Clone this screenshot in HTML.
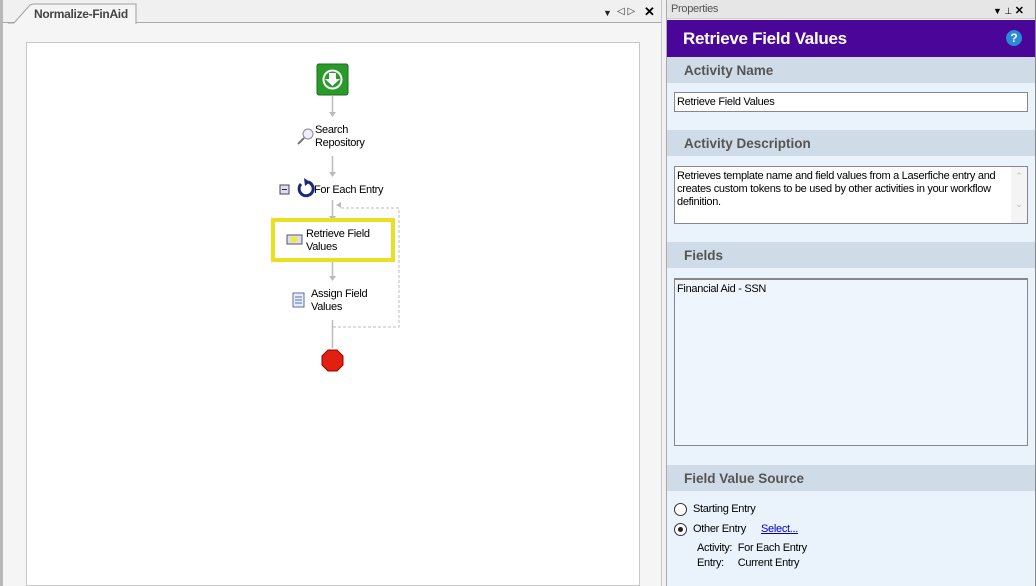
<!DOCTYPE html>
<html><head><meta charset="utf-8"><style>
*{margin:0;padding:0;box-sizing:border-box}
body{width:1036px;height:586px;overflow:hidden;background:#f0f0f0;font-family:"Liberation Sans",sans-serif;font-size:11px;color:#000;position:relative}
.a{position:absolute}
.t{letter-spacing:-0.3px;white-space:nowrap}
.hdr{position:absolute;left:667px;width:368px;height:26px;background:#cfdbe6;color:#555;font-weight:bold;font-size:13.5px;padding:6px 0 0 17px}
.box{position:absolute;background:#fff;border:1px solid #828790}
</style></head><body>
<!-- left panel -->
<div class="a" style="left:0;top:0;width:662px;height:586px;background:#f0f0f0;border-left:3px solid #b8b8b8"></div>
<div class="a" style="left:3px;top:22px;width:658px;height:564px;background:#f5f5f5;border-top:1px solid #a8a8a8"></div>
<svg class="a" style="left:8px;top:3px" width="130" height="21"><path d="M0 20 L6 20 L22 2 Q24 1 26 1 L128 1 L128 21" fill="#f5f5f5" stroke="#a0a0a0"/></svg>
<div class="a t" style="left:34px;top:7px;font-weight:bold;font-size:12px;color:#444">Normalize-FinAid</div>
<div class="a" style="left:603px;top:8px;font-size:9px;color:#222">▼</div>
<div class="a" style="left:617px;top:6px;font-size:10px;color:#333">◁ ▷</div>
<div class="a" style="left:644px;top:4px;font-size:13px;font-weight:bold">✕</div>
<div class="a" style="left:26px;top:42px;width:614px;height:544px;background:#fff;border:1px solid #c8c8c8"></div>
<div class="a" style="left:661px;top:0;width:5px;height:586px;background:#f0f0f0;border-left:1px solid #c8c8c8"></div>
<!-- workflow -->
<svg class="a" style="left:270px;top:60px" width="140" height="320">
<rect x="47" y="4" width="31" height="31" rx="2" fill="#2a9a2a" stroke="#1b6e1b"/>
<circle cx="62.5" cy="19.5" r="10" fill="#fff"/><circle cx="62.5" cy="19.5" r="8" fill="#2a9a2a"/>
<path d="M59 13h7v6h4l-7.5 7-7.5-7h4z" fill="#fff"/>
<g stroke="#bbb" stroke-width="1.5"><line x1="62.5" y1="36" x2="62.5" y2="54"/><line x1="62.5" y1="96" x2="62.5" y2="114"/><line x1="62.5" y1="140" x2="62.5" y2="158"/><line x1="62.5" y1="202" x2="62.5" y2="218"/><line x1="62.5" y1="260" x2="62.5" y2="288"/></g>
<g fill="#bbb"><path d="M59 52h7l-3.5 5z"/><path d="M59 112h7l-3.5 5z"/><path d="M59 156h7l-3.5 5z"/><path d="M59 216h7l-3.5 5z"/><path d="M66 145l5-3v6z"/></g>
<path d="M71 148H129V267H63" fill="none" stroke="#bbb" stroke-dasharray="3 2"/>
<circle cx="38" cy="74" r="5" fill="#eef" stroke="#888"/><line x1="34" y1="78" x2="28" y2="84" stroke="#777" stroke-width="2"/>
<rect x="10" y="125" width="9" height="9" fill="#dde" stroke="#446"/><line x1="12" y1="129.5" x2="17" y2="129.5" stroke="#224"/>
<path d="M31 124a7 7 0 1 0 7-2" fill="none" stroke="#1a2a7a" stroke-width="3"/><path d="M34 118l6 4-5 4z" fill="#1a2a7a"/>
<rect x="3" y="160" width="120" height="40" fill="none" stroke="#e8e020" stroke-width="4"/>
<rect x="17" y="175" width="15" height="9" fill="#dde" stroke="#556"/><rect x="21" y="177" width="6" height="5" fill="#ee2"/>
<rect x="23" y="233" width="11" height="14" fill="#e8eef8" stroke="#5670a8"/><g stroke="#5670a8"><line x1="25" y1="237" x2="32" y2="237"/><line x1="25" y1="240" x2="32" y2="240"/><line x1="25" y1="243" x2="32" y2="243"/></g>
<path d="M58 290h9l6 6v9l-6 6h-9l-6-6v-9z" fill="#e02010" stroke="#900"/>
</svg>
<div class="a t" style="left:315px;top:124px;line-height:13px">Search<br>Repository</div>
<div class="a t" style="left:314px;top:184px">For Each Entry</div>
<div class="a t" style="left:306px;top:228px;line-height:13px">Retrieve Field<br>Values</div>
<div class="a t" style="left:311px;top:288px;line-height:13px">Assign Field<br>Values</div>
<!-- right panel -->
<div class="a" style="left:666px;top:0;width:370px;height:586px;background:#eaf3fc;border-left:1px solid #aaa;border-right:1px solid #888"></div>
<div class="a" style="left:667px;top:0;width:368px;height:19px;background:#e6e6e6;border-bottom:1px solid #ccc"></div>
<div class="a t" style="left:671px;top:3px;color:#555">Properties</div>
<div class="a" style="left:993px;top:4px;font-size:9px">▼ ⊥ <b style="font-size:11px">✕</b></div>
<div class="a" style="left:667px;top:20px;width:368px;height:37px;background:#4a0599"></div>
<div class="a t" style="left:683px;top:29px;color:#fff;font-weight:bold;font-size:17px">Retrieve Field Values</div>
<div class="a" style="left:1006px;top:30px;width:16px;height:16px;border-radius:50%;background:#2a8ad8;color:#fff;font-weight:bold;font-size:12px;text-align:center;line-height:16px">?</div>
<div class="hdr" style="top:57px">Activity Name</div>
<div class="box t" style="left:674px;top:92px;width:354px;height:20px;padding:3px 2px">Retrieve Field Values</div>
<div class="hdr" style="top:130px">Activity Description</div>
<div class="box" style="left:674px;top:166px;width:354px;height:58px;padding:3px 2px;line-height:13px;letter-spacing:-0.3px">Retrieves template name and field values from a Laserfiche entry and<br>creates custom tokens to be used by other activities in your workflow<br>definition.</div>
<div class="a" style="left:1011px;top:167px;width:16px;height:56px;background:#f4f4f4;color:#bbb;font-size:9px;text-align:center;line-height:14px;padding-top:2px">⌃<br><br>⌄</div>
<div class="hdr" style="top:242px">Fields</div>
<div class="a t" style="left:674px;top:278px;width:354px;height:168px;background:#eef5fc;border:1px solid #828790;border-top:2px solid #888;padding:3px 2px">Financial Aid - SSN</div>
<div class="hdr" style="top:465px">Field Value Source</div>
<div class="a" style="left:674px;top:503px;width:13px;height:13px;border-radius:50%;border:1px solid #333;background:#fff"></div>
<div class="a t" style="left:693px;top:503px">Starting Entry</div>
<div class="a" style="left:674px;top:523px;width:13px;height:13px;border-radius:50%;border:1px solid #333;background:#fff"></div>
<div class="a" style="left:678px;top:527px;width:5px;height:5px;border-radius:50%;background:#222"></div>
<div class="a t" style="left:693px;top:523px">Other Entry</div>
<div class="a t" style="left:761px;top:523px;color:#0000cc;text-decoration:underline">Select...</div>
<div class="a t" style="left:697px;top:542px">Activity:&nbsp; For Each Entry</div>
<div class="a t" style="left:697px;top:557px">Entry:&nbsp;&nbsp;&nbsp;&nbsp; Current Entry</div>
</body></html>
